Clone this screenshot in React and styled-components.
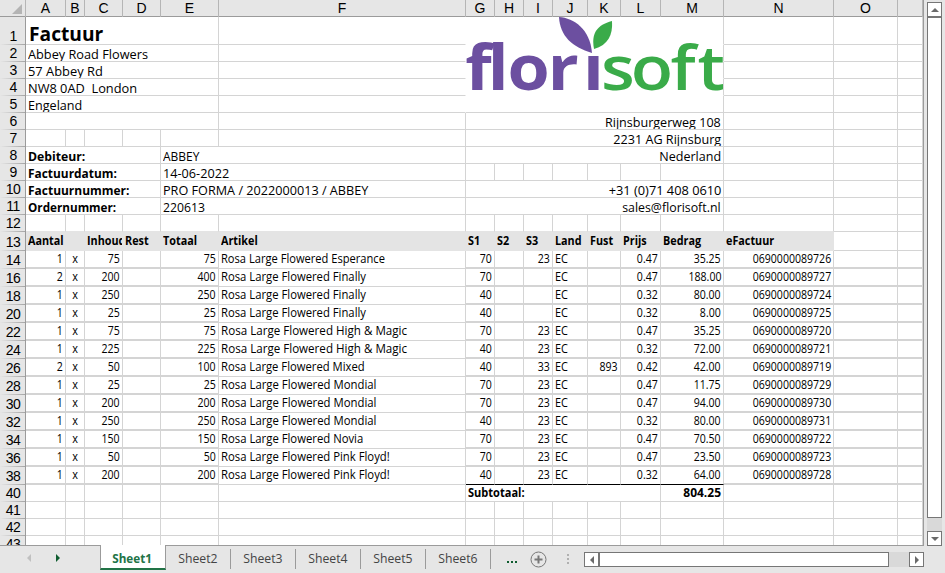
import React from "react";
import styled, { createGlobalStyle, css } from "styled-components";

const GlobalStyle = createGlobalStyle`
  *, *::before, *::after { box-sizing: border-box; }
  html, body { margin: 0; padding: 0; overflow: hidden; background: #e6e6e6; }
`;

const LINE = "#d4d4d4";
const CHROME = "#e6e6e6";
const EDGE = "#9b9b9b";
const UI = `"Open Sans", "Noto Sans", sans-serif`;

const COLUMNS = [
  ["A", 40], ["B", 19], ["C", 38], ["D", 38], ["E", 58], ["F", 247],
  ["G", 29], ["H", 29], ["I", 29], ["J", 35], ["K", 33], ["L", 40],
  ["M", 63], ["N", 110], ["O", 64], ["", 25],
];
const TEMPLATE = COLUMNS.map(([, w]) => `${w}px`).join(" ");

const Window = styled.div`
  width: 945px;
  height: 573px;
  display: flex;
  flex-direction: column;
  background: ${CHROME};
  color: #000;
  font-family: ${UI};
  overflow: hidden;
`;
const Workspace = styled.div`
  display: flex;
  height: 546px;
`;
const Sheet = styled.div`
  width: 924px;
  height: 546px;
  overflow: hidden;
  border-right: 1px solid ${EDGE};
  border-bottom: 1px solid ${EDGE};
`;
const HeaderRow = styled.div`
  display: grid;
  grid-template-columns: 26px ${TEMPLATE};
  height: 17px;
  border-bottom: 1px solid ${EDGE};
`;
const Corner = styled.div`
  display: flex;
  justify-content: flex-end;
  align-items: flex-end;
  padding: 0 3px 3px 0;
  border-right: 1px solid #b5b5b5;
`;
const ColumnHead = styled.div`
  border-right: 1px solid #b5b5b5;
  font: 14px/17px "Liberation Sans", Arial, sans-serif;
  text-align: center;
`;
const SheetRow = styled.div`
  display: grid;
  grid-template-columns: 26px ${TEMPLATE};
  height: ${(p) => p.$h}px;
`;
const RowHead = styled.div`
  display: flex;
  align-items: flex-end;
  justify-content: center;
  background: linear-gradient(90deg, ${CHROME} 0, #a6a6a6 100%) 0 100% / 100% 1px no-repeat ${CHROME};
  border-right: 1px solid ${EDGE};
  font: 14px/17px "Liberation Sans", Arial, sans-serif;
  letter-spacing: -0.6px;
  padding-left: 1px;
  overflow: hidden;
  height: ${(p) => p.$h}px;
`;
const Cell = styled.div`
  grid-column: span ${(p) => p.$span || 1};
  display: flex;
  align-items: flex-end;
  min-width: 0;
  overflow: hidden;
  white-space: pre;
  padding: 0 2px;
  justify-content: ${(p) => ({ right: "flex-end", center: "center" })[p.$align] || "flex-start"};
  background: ${(p) => (p.$shade ? "#e4e4e4" : "#fff")};
  border-right: 1px solid ${(p) => (p.$shade ? "#e4e4e4" : p.$open ? "#fff" : LINE)};
  border-bottom: ${(p) => (p.$thick ? 2 : 1)}px solid ${(p) => (p.$total ? "#000" : p.$shade || p.$aboveShade ? "#e4e4e4" : LINE)};
`;
const variants = {
  title: css`font-size: 20px; font-weight: 700; line-height: 22px; margin: 0 0 -1px 1px; --sx: 0.96;`,
  info: css`font-size: 13px; line-height: 15px; margin-bottom: -1px; --sx: 0.97;`,
  label: css`font-size: 13px; font-weight: 700; line-height: 15px; margin-bottom: -1px; --sx: 0.91;`,
  head: css`font-size: 12px; font-weight: 700; line-height: 17px; --sx: 0.9; padding-bottom: 1px;`,
  data: css`font-size: 12px; line-height: 16px; --sx: 0.91;`,
  number: css`font-size: 12px; line-height: 16px; --sx: 0.88;`,
  sum: css`font-size: 12px; font-weight: 700; line-height: 16px; --sx: 0.92;`,
};
const Text = styled.span`
  ${(p) => variants[p.$kind]}
  display: block;
  flex: none;
  transform: scaleX(${(p) => p.$sx || "var(--sx)"});
  transform-origin: ${(p) => p.$align || "left"} center;
  ${(p) => p.$lift && css`padding-bottom: 1px;`}
`;

const Logo = styled.svg`
  position: absolute;
  left: 0;
  top: 0;
  width: 259px;
  height: 95px;
`;
const LogoCell = styled.div`
  grid-column: span 7;
  position: relative;
  z-index: ${(p) => (p.$first ? 1 : 0)};
  background: #fff;
  border-right: 1px solid ${LINE};
  border-bottom: 1px solid ${(p) => (p.$last ? LINE : "#fff")};
`;

const VerticalBar = styled.div`
  display: flex;
  flex-direction: column;
  width: 15px;
  height: 544px;
  margin: 2px 0 0 3px;
  background: #d9d9d9;
`;
const HorizontalBar = styled.div`
  display: flex;
  width: 340px;
  height: 15px;
  margin: 6px 0 0 15px;
  background: #d9d9d9;
`;
const ScrollButton = styled.div`
  width: 15px;
  height: 15px;
  flex: none;
  display: flex;
  align-items: center;
  justify-content: center;
  background: #fff;
  border: 1px solid #767676;
`;
const Thumb = styled.div`
  width: ${(p) => p.$w}px;
  height: ${(p) => p.$h}px;
  background: #fff;
  border: 1px solid #767676;
`;
const Filler = styled.div`flex: 1;`;

const TabBar = styled.div`
  display: flex;
  height: 27px;
`;
const TabNav = styled.div`
  display: flex;
  width: 100px;
  padding: 8px 0 0 27px;
  gap: 25px;
`;
const ActiveTab = styled.div`
  width: 66px;
  height: 25px;
  margin-top: -1px;
  padding-right: 2px;
  display: flex;
  justify-content: center;
  background: #fff;
  border-left: 1px solid ${EDGE};
  border-right: 1px solid ${EDGE};
  border-bottom: 2px solid #217346;
  color: #217346;
  font-size: 13px;
  font-weight: 700;
  line-height: 26px;
`;
const Tab = styled.div`
  width: 65px;
  height: 20px;
  margin-top: 3px;
  padding-right: 1px;
  display: flex;
  justify-content: center;
  border-right: 1px solid #9b9b9b;
  color: #444;
  font-size: 13px;
  line-height: 19px;
`;
const TabText = styled.span`
  display: block;
  flex: none;
  transform: scaleX(${(p) => p.$sx});
`;
const MoreTabs = styled.div`
  display: flex;
  gap: 2px;
  margin: 15px 0 0 16px;
  width: 23px;
`;
const Dot = styled.i`
  width: 2px;
  height: 2px;
  margin-right: ${(p) => p.$gap || 0}px;
  background: ${(p) => p.$color};
`;
const Grip = styled.div`
  display: flex;
  flex-direction: column;
  gap: 2px;
  margin: 8px 0 0 20px;
`;
const AddSheet = styled.svg`
  width: 17px;
  height: 17px;
  margin-top: 5px;
`;

function Triangle({ dir, color = "#6a6a6a", size = 4 }) {
  const s = size;
  const pts = {
    up: [`0,${s} ${s},0 ${2 * s},${s}`, 2 * s, s],
    down: [`0,0 ${s},${s} ${2 * s},0`, 2 * s, s],
    left: [`${s},0 0,${s} ${s},${2 * s}`, s, 2 * s],
    right: [`0,0 ${s},${s} 0,${2 * s}`, s, 2 * s],
  }[dir];
  return (
    <svg width={pts[1]} height={pts[2]}><polygon points={pts[0]} fill={color} /></svg>
  );
}

function FlorisoftLogo() {
  return (
    <Logo viewBox="0 0 259 95">
      <g fontFamily="Open Sans" fontSize="62">
        <text transform="scale(1.1 1)" x="-0.6 19.7 37.8 74.3 106.3" y="73" fontWeight="700" fill="#6c4fa0">florı</text>
        <text transform="scale(1.12 1)" x="120.5 147 182.7 206.6" y="73" fontWeight="600" fill="#3aab49">soft</text>
      </g>
      <path d="M93 0C108 1 124 12 126 36C106 30 94 19 93 0Z" fill="#6c4fa0" />
      <path d="M146 4C147 18 142 28 128 32C125 16 131 8 146 4Z" fill="#3aab49" />
    </Logo>
  );
}

const C = (text, kind, align, span, extra) => ({ text, kind, align, span, ...extra });
const blanks = (n) => Array.from({ length: n }, () => C());
const tail = () => blanks(3);

const address = (text, kind, sx, first, last) => [
  C(text, kind, "left", 5, { sx }),
  C("", "", "", 1, { open: true }),
  { logo: true, first, last },
  ...tail(),
];
const detail = (label, lsx, value, vsx, right) => [
  C(label, "label", "left", 4, { sx: lsx }),
  C(value, "info", "left", 2, { sx: vsx }),
  ...right,
  ...tail(),
];
const contact = (text, sx) => [C(text, "info", "right", 7, { sx })];

/* Horizontal scale of each article name. */
const ARTICLE_SCALE = {
  Esperance: 0.927,
  Finally: 0.94,
  "High & Magic": 0.967,
  Mixed: 0.938,
  Mondial: 0.946,
  Novia: 0.943,
  "Pink Floyd!": 0.943,
};

const ORDER_LINES = [
  [14, 1, 75, 75, "Esperance", 70, 23, "", "0.47", "35.25", "0690000089726"],
  [16, 2, 200, 400, "Finally", 70, "", "", "0.47", "188.00", "0690000089727"],
  [18, 1, 250, 250, "Finally", 40, "", "", "0.32", "80.00", "0690000089724"],
  [20, 1, 25, 25, "Finally", 40, "", "", "0.32", "8.00", "0690000089725"],
  [22, 1, 75, 75, "High & Magic", 70, 23, "", "0.47", "35.25", "0690000089720"],
  [24, 1, 225, 225, "High & Magic", 40, 23, "", "0.32", "72.00", "0690000089721"],
  [26, 2, 50, 100, "Mixed", 40, 33, 893, "0.42", "42.00", "0690000089719"],
  [28, 1, 25, 25, "Mondial", 70, 23, "", "0.47", "11.75", "0690000089729"],
  [30, 1, 200, 200, "Mondial", 70, 23, "", "0.47", "94.00", "0690000089730"],
  [32, 1, 250, 250, "Mondial", 40, 23, "", "0.32", "80.00", "0690000089731"],
  [34, 1, 150, 150, "Novia", 70, 23, "", "0.47", "70.50", "0690000089722"],
  [36, 1, 50, 50, "Pink Floyd!", 70, 23, "", "0.47", "23.50", "0690000089723"],
  [38, 1, 200, 200, "Pink Floyd!", 40, 23, "", "0.32", "64.00", "0690000089728"],
];

const orderRow = ([n, qty, content, total, name, s1, s3, fust, price, amount, code]) => {
  const thick = { thick: true };
  const mid = n === 38 ? { total: true, lift: true } : thick;
  const num = (v, e) => C(String(v), "number", "right", 1, e);
  return {
    n,
    h: 18,
    cells: [
      num(qty, thick),
      C("x", "data", "center", 1, thick),
      num(content, thick),
      num("", thick),
      num(total, thick),
      C(`Rosa Large Flowered ${name}`, "data", "left", 1, { sx: ARTICLE_SCALE[name], lift: true }),
      num(s1, mid), num("", mid), num(s3, mid),
      C("EC", "data", "left", 1, mid),
      num(fust, mid), num(price, mid), num(amount, mid),
      num(code, thick), num("", thick), num("", thick),
    ],
  };
};

const HEADINGS = ["Aantal", "", "Inhoud", "Rest", "Totaal", "Artikel", "S1", "S2", "S3", "Land", "Fust", "Prijs", "Bedrag", "eFactuur"];

const ROWS = [
  { n: 1, h: 28, cells: address("Factuur", "title", null, true) },
  { n: 2, h: 17, cells: address("Abbey Road Flowers", "info", 0.98) },
  { n: 3, h: 17, cells: address("57 Abbey Rd", "info", 0.99) },
  { n: 4, h: 17, cells: address("NW8 0AD  London", "info", 0.985) },
  { n: 5, h: 17, cells: address("Engeland", "info", 0.97, false, true) },
  { n: 6, h: 17, cells: [C("", "", "", 5), C(), ...contact("Rijnsburgerweg 108", 0.967), ...tail()] },
  { n: 7, h: 17, cells: [...blanks(6), ...contact("2231 AG Rijnsburg", 0.97), ...tail()] },
  { n: 8, h: 17, cells: detail("Debiteur:", 0.94, "ABBEY", 0.92, contact("Nederland", 0.965)) },
  { n: 9, h: 17, cells: detail("Factuurdatum:", 0.915, "14-06-2022", 0.975, blanks(7)) },
  { n: 10, h: 17, cells: detail("Factuurnummer:", 0.92, "PRO FORMA / 2022000013 / ABBEY", 0.973, contact("+31 (0)71 408 0610", 0.985)) },
  { n: 11, h: 17, cells: detail("Ordernummer:", 0.9, "220613", 0.94, contact("sales@florisoft.nl", 0.95)) },
  { n: 12, h: 17, cells: blanks(16).map((c, i) => ({ ...c, aboveShade: i < 14 })) },
  { n: 13, h: 19, cells: [...HEADINGS.map((t) => C(t, "head", "left", 1, { shade: true })), ...blanks(2)] },
  ...ORDER_LINES.map(orderRow),
  { n: 40, h: 17, cells: [...blanks(6), C("Subtotaal:", "sum", "left", 6), C("804.25", "sum", "right", 1, { sx: 1 }), ...tail()] },
  { n: 41, h: 17, cells: blanks(16) },
  { n: 42, h: 17, cells: blanks(16) },
  { n: 43, h: 17, cells: blanks(16) },
];

function GridCell({ cell }) {
  if (cell.logo) {
    return <LogoCell $first={cell.first} $last={cell.last}>{cell.first && <FlorisoftLogo />}</LogoCell>;
  }
  return (
    <Cell
      $span={cell.span}
      $align={cell.align}
      $shade={cell.shade}
      $aboveShade={cell.aboveShade}
      $open={cell.open}
      $thick={cell.thick}
      $total={cell.total}
    >
      {cell.text ? (
        <Text $kind={cell.kind} $align={cell.align} $sx={cell.sx} $lift={cell.lift}>{cell.text}</Text>
      ) : null}
    </Cell>
  );
}

export default function App() {
  return (
    <Window>
      <GlobalStyle />
      <Workspace>
        <Sheet>
          <HeaderRow>
            <Corner>
              <svg width="10" height="10"><polygon points="10,0 10,10 0,10" fill="#b4b4b4" /></svg>
            </Corner>
            {COLUMNS.map(([name], i) => <ColumnHead key={i}>{name}</ColumnHead>)}
          </HeaderRow>
          {ROWS.map((row) => (
            <SheetRow key={row.n} $h={row.h}>
              <RowHead $h={row.h}>{row.n}</RowHead>
              {row.cells.map((cell, i) => <GridCell key={i} cell={cell} />)}
            </SheetRow>
          ))}
        </Sheet>
        <VerticalBar>
          <ScrollButton><Triangle dir="up" /></ScrollButton>
          <Thumb $w={15} $h={501} />
          <Filler />
          <ScrollButton><Triangle dir="down" /></ScrollButton>
        </VerticalBar>
      </Workspace>
      <TabBar>
        <TabNav>
          <Triangle dir="left" color="#c0c0c0" />
          <Triangle dir="right" color="#0e5c2f" />
        </TabNav>
        <ActiveTab><TabText $sx={0.9}>Sheet1</TabText></ActiveTab>
        {[2, 3, 4, 5, 6].map((n) => (
          <Tab key={n}><TabText $sx={0.94}>{`Sheet${n}`}</TabText></Tab>
        ))}
        <MoreTabs>
          {[0, 1, 2].map((i) => <Dot key={i} $color="#0e5c2f" />)}
        </MoreTabs>
        <AddSheet viewBox="0 0 17 17">
          <circle cx="8.5" cy="8.5" r="7.5" fill="none" stroke="#777" />
          <path d="M8.5 4.5v8M4.5 8.5h8" stroke="#777" strokeWidth="2" />
        </AddSheet>
        <Grip>
          {[0, 1, 2].map((i) => <Dot key={i} $color="#b0b0b0" />)}
        </Grip>
        <HorizontalBar>
          <ScrollButton><Triangle dir="left" /></ScrollButton>
          <Thumb $w={290} $h={15} />
          <Filler />
          <ScrollButton><Triangle dir="right" /></ScrollButton>
        </HorizontalBar>
      </TabBar>
    </Window>
  );
}
